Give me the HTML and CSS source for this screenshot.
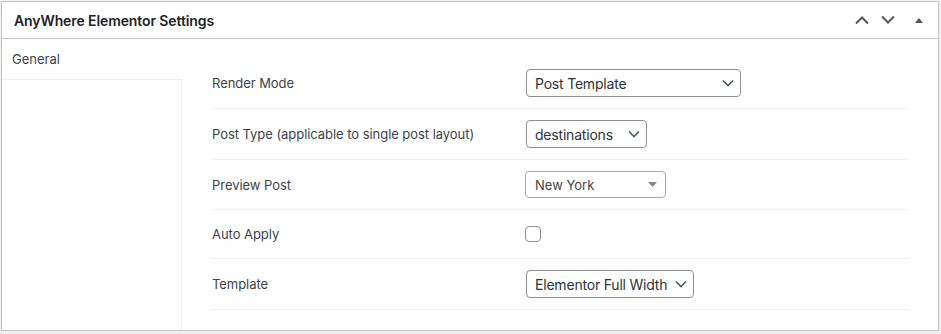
FILE: index.html
```html
<!DOCTYPE html>
<html lang="en">
<head>
<meta charset="UTF-8">
<title>AnyWhere Elementor Settings</title>
<link rel="stylesheet" href="styles.css">
</head>
<body>

<div class="postbox">
  <div class="postbox-header">
    <h2>AnyWhere Elementor Settings</h2>
    <div class="handle-actions">
      <button class="handle-btn" aria-label="Move up">
        <svg width="16" height="10" viewBox="0 0 16 10"><path d="M2 8.5l6-6 6 6" fill="none" stroke="#50575e" stroke-width="2"/></svg>
      </button>
      <button class="handle-btn" aria-label="Move down">
        <svg width="16" height="10" viewBox="0 0 16 10"><path d="M2 1.5l6 6 6-6" fill="none" stroke="#50575e" stroke-width="2"/></svg>
      </button>
      <button class="handle-btn toggle" aria-label="Toggle panel">
        <svg width="8" height="5" viewBox="0 0 8 5"><path d="M0 5L4 0l4 5z" fill="#50575e"/></svg>
      </button>
    </div>
  </div>

  <div class="postbox-inside">
    <div class="tabs">
      <div class="tab active">General</div>
      <div class="tab-fill"></div>
    </div>

    <div class="fields">
      <div class="field-row">
        <div class="field-label">Render Mode</div>
        <div class="field-input">
          <span class="select" style="width:215px">Post Template
            <svg class="chev" width="12" height="8" viewBox="0 0 12 8"><path d="M1 1.5l5 5 5-5" fill="none" stroke="#50575e" stroke-width="1.6"/></svg>
          </span>
        </div>
      </div>
      <div class="field-row">
        <div class="field-label">Post Type (applicable to single post layout)</div>
        <div class="field-input">
          <span class="select" style="width:121px">destinations
            <svg class="chev" width="12" height="8" viewBox="0 0 12 8"><path d="M1 1.5l5 5 5-5" fill="none" stroke="#50575e" stroke-width="1.6"/></svg>
          </span>
        </div>
      </div>
      <div class="field-row">
        <div class="field-label">Preview Post</div>
        <div class="field-input">
          <span class="select2">New York
            <svg width="9" height="5" viewBox="0 0 9 5"><path d="M0 0h9L4.5 5z" fill="#888"/></svg>
          </span>
        </div>
      </div>
      <div class="field-row">
        <div class="field-label">Auto Apply</div>
        <div class="field-input">
          <span class="checkbox"></span>
        </div>
      </div>
      <div class="field-row">
        <div class="field-label">Template</div>
        <div class="field-input">
          <span class="select" style="width:168px">Elementor Full Width
            <svg class="chev" width="12" height="8" viewBox="0 0 12 8"><path d="M1 1.5l5 5 5-5" fill="none" stroke="#50575e" stroke-width="1.6"/></svg>
          </span>
        </div>
      </div>
    </div>
  </div>
</div>

</body>
</html>
```

FILE: styles.css
```css
:root {
  --border:#c3c4c7; --line:#f0f0f1; --text:#3c434a; --dark:#1d2327; --input:#8c8f94;
}
body{margin:0;background:#f0f0f1;font-family:Inter,"Liberation Sans",sans-serif;font-size:13px;color:var(--text)}
.postbox{margin:1px 0 0 1px;width:938px;height:330px;box-sizing:border-box;background:#fff;border:1px solid var(--border);display:flex;flex-direction:column}
.postbox-header{height:37px;box-sizing:border-box;border-bottom:1px solid var(--border);display:flex;align-items:center;justify-content:space-between}
.postbox-header h2{margin:0;padding-left:12px;font-size:14px;font-weight:600;color:var(--dark);letter-spacing:-0.1px}
.handle-actions{display:flex;align-items:center;padding-right:1px}
.handle-btn{border:none;background:none;padding:0;width:26px;height:36px;display:flex;align-items:center;justify-content:center}
.handle-btn.toggle{width:36px}
.postbox-inside{flex:1;display:flex}
.tabs{width:180px;display:flex;flex-direction:column}
.tab{height:40px;line-height:40px;padding-left:10px;color:var(--text)}
.tab-fill{flex:1;border-top:1px solid var(--line);border-right:1px solid var(--line)}
.fields{flex:1;padding:19px 30px 0 30px}
.field-row{display:grid;grid-template-columns:314px 1fr;padding:11px 0;border-bottom:1px solid var(--line);align-items:center;min-height:26px}
.field-label{line-height:26px;letter-spacing:-0.05px}
.field-input{display:flex;align-items:center}
.select{height:28px;box-sizing:border-box;border:1px solid var(--input);border-radius:4px;padding:0 6px 0 8px;display:flex;align-items:center;justify-content:space-between;font-size:14px;color:#2c3338;letter-spacing:-0.2px;white-space:nowrap}
.select2{width:141px;height:27px;box-sizing:border-box;margin-left:-1px;border:1px solid #aaa;border-radius:4px;padding:0 8px 0 9px;display:flex;align-items:center;justify-content:space-between;font-size:13px;color:#444}
.checkbox{width:16px;height:16px;box-sizing:border-box;margin-left:-1px;border:1px solid var(--input);border-radius:4px}
```
